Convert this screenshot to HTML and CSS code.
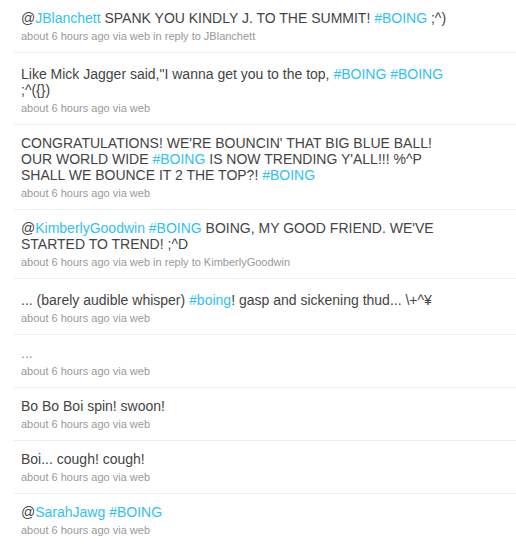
FILE: index.html
```html
<!DOCTYPE html>
<html lang="en">
<head>
  <meta charset="UTF-8">
  <title>#BOING</title>
  <link rel="stylesheet" href="styles.css">
</head>
<body>
  <ol class="timeline">
    <li class="status">
      <span class="entry-content">@<a href="#">JBlanchett</a> SPANK YOU KINDLY J. TO THE SUMMIT! <a href="#">#BOING</a> ;^)</span>
      <span class="meta"><a href="#">about 6 hours ago</a> via web <a href="#">in reply to JBlanchett</a></span>
    </li>
    <li class="status tall">
      <span class="entry-content">Like Mick Jagger said,"I wanna get you to the top, <a href="#">#BOING</a> <a href="#">#BOING</a> ;^({})</span>
      <span class="meta"><a href="#">about 6 hours ago</a> via web</span>
    </li>
    <li class="status">
      <span class="entry-content">CONGRATULATIONS! WE'RE BOUNCIN' THAT BIG BLUE BALL! OUR WORLD WIDE <a href="#">#BOING</a> IS NOW TRENDING Y'ALL!!! %^P SHALL WE BOUNCE IT 2 THE TOP?! <a href="#">#BOING</a></span>
      <span class="meta"><a href="#">about 6 hours ago</a> via web</span>
    </li>
    <li class="status">
      <span class="entry-content">@<a href="#">KimberlyGoodwin</a> <a href="#">#BOING</a> BOING, MY GOOD FRIEND. WE'VE STARTED TO TREND! ;^D</span>
      <span class="meta"><a href="#">about 6 hours ago</a> via web <a href="#">in reply to KimberlyGoodwin</a></span>
    </li>
    <li class="status tall">
      <span class="entry-content">... (barely audible whisper) <a href="#">#boing</a>! gasp and sickening thud... \+^¥</span>
      <span class="meta"><a href="#">about 6 hours ago</a> via web</span>
    </li>
    <li class="status">
      <span class="entry-content faint">...</span>
      <span class="meta"><a href="#">about 6 hours ago</a> via web</span>
    </li>
    <li class="status">
      <span class="entry-content">Bo Bo Boi spin! swoon!</span>
      <span class="meta"><a href="#">about 6 hours ago</a> via web</span>
    </li>
    <li class="status">
      <span class="entry-content">Boi... cough! cough!</span>
      <span class="meta"><a href="#">about 6 hours ago</a> via web</span>
    </li>
    <li class="status">
      <span class="entry-content">@<a href="#">SarahJawg</a> <a href="#">#BOING</a></span>
      <span class="meta"><a href="#">about 6 hours ago</a> via web</span>
    </li>
  </ol>
</body>
</html>
```

FILE: styles.css
```css
body {
  margin: 0;
  font-family: "Liberation Sans", Arial, sans-serif;
  color: #444;
  background: #fff;
}
a {
  color: #2fc2ef;
  text-decoration: none;
}
.timeline {
  list-style: none;
  margin: 0 0 0 14px;
  padding: 0;
}
.status {
  padding: 10px 0 9px 7px;
  border-bottom: 1px solid #eee;
}
/* lines with odd glyphs sit a little lower */
.status.tall {
  padding-top: 13px;
}
.entry-content {
  display: block;
  width: 440px;
  font-size: 14px;
  line-height: 16px;
}
.entry-content.faint {
  color: #999;
}
.meta {
  display: block;
  margin-top: 3px;
  font-size: 11px;
  line-height: 14px;
  color: #999;
}
.meta a {
  color: #999;
}
```
